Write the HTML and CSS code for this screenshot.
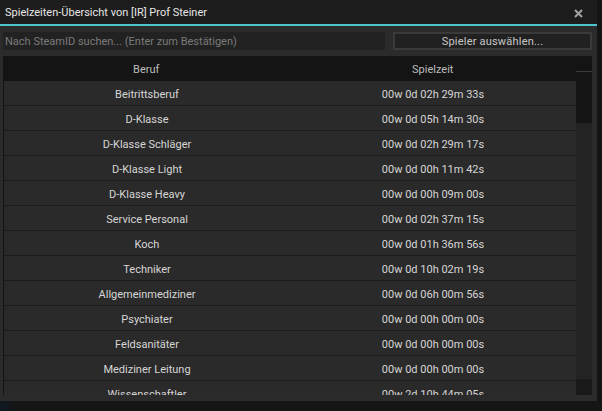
FILE: index.html
```html
<!DOCTYPE html>
<html lang="de">
<head>
    <meta charset="UTF-8">
    <title>Spielzeiten-Übersicht</title>
    <link rel="stylesheet" href="styles.css">
</head>
<body>
    <div class="frame">
        <div class="titlebar">
            <span class="title">Spielzeiten-Übersicht von [IR] Prof Steiner</span>
            <svg class="close" width="9" height="9" viewBox="0 0 9 9">
                <path d="M1 1 L8 8 M8 1 L1 8" stroke="#a3a3a3" stroke-width="2" fill="none"/>
            </svg>
        </div>

        <div class="content">
            <div class="toolbar">
                <input class="search" type="text" placeholder="Nach SteamID suchen... (Enter zum Bestätigen)">
                <button class="pick">Spieler auswählen...</button>
            </div>

            <div class="list">
                <div class="list-main">
                    <div class="list-head">
                        <div class="cell">Beruf</div>
                        <div class="cell">Spielzeit</div>
                    </div>
                    <div class="rows">
                        <div class="row"><div class="cell">Beitrittsberuf</div><div class="cell">00w 0d 02h 29m 33s</div></div>
                        <div class="row"><div class="cell">D-Klasse</div><div class="cell">00w 0d 05h 14m 30s</div></div>
                        <div class="row"><div class="cell">D-Klasse Schläger</div><div class="cell">00w 0d 02h 29m 17s</div></div>
                        <div class="row"><div class="cell">D-Klasse Light</div><div class="cell">00w 0d 00h 11m 42s</div></div>
                        <div class="row"><div class="cell">D-Klasse Heavy</div><div class="cell">00w 0d 00h 09m 00s</div></div>
                        <div class="row"><div class="cell">Service Personal</div><div class="cell">00w 0d 02h 37m 15s</div></div>
                        <div class="row"><div class="cell">Koch</div><div class="cell">00w 0d 01h 36m 56s</div></div>
                        <div class="row"><div class="cell">Techniker</div><div class="cell">00w 0d 10h 02m 19s</div></div>
                        <div class="row"><div class="cell">Allgemeinmediziner</div><div class="cell">00w 0d 06h 00m 56s</div></div>
                        <div class="row"><div class="cell">Psychiater</div><div class="cell">00w 0d 00h 00m 00s</div></div>
                        <div class="row"><div class="cell">Feldsanitäter</div><div class="cell">00w 0d 00h 00m 00s</div></div>
                        <div class="row"><div class="cell">Mediziner Leitung</div><div class="cell">00w 0d 00h 00m 00s</div></div>
                        <div class="row"><div class="cell">Wissenschaftler</div><div class="cell">00w 2d 10h 44m 05s</div></div>
                    </div>
                </div>
                <div class="scrollbar">
                    <div class="sb-head"></div>
                    <div class="sb-grip"></div>
                    <div class="sb-track"></div>
                    <div class="sb-down"></div>
                </div>
            </div>
        </div>
    </div>
</body>
</html>
```

FILE: styles.css
```css
body {
    margin: 0;
    width: 602px;
    height: 411px;
    overflow: hidden;
    background-color: #151515;
    background-image: radial-gradient(circle at 0 100%, #0d1a26 0, transparent 18px);
    font-family: Roboto, "Noto Sans", sans-serif;
    font-size: 11px;
    color: #d4d4d4;
}
.frame {
    width: 597px;
    height: 401px;
    display: flex;
    flex-direction: column;
    background-color: #2b2b2b;
}
.titlebar {
    height: 24px;
    flex: none;
    display: flex;
    align-items: center;
    justify-content: space-between;
    padding: 0 14px 0 5px;
    background-color: #1d1d1d;
    border-bottom: 2px solid #4fc3cb;
}
.title {
    color: #e6e6e6;
    font-size: 11px;
    padding-top: 1px;
}
.close {
    display: block;
    margin-top: 3px;
}
.content {
    flex: 1;
    min-height: 0;
    display: flex;
    flex-direction: column;
    padding: 6px 5px 6px 3px;
    gap: 6px;
}
.toolbar {
    display: flex;
    gap: 8px;
    height: 18px;
}
.search {
    width: 382px;
    box-sizing: border-box;
    border: none;
    padding: 0 2px;
    background-color: #222;
    font: inherit;
    font-size: 11px;
    color: #ddd;
    outline: none;
}
.search::placeholder {
    color: #7a7a7a;
}
.pick {
    flex: 1;
    box-sizing: border-box;
    border: 2px solid #3a3a3a;
    background-color: #212121;
    color: #c8c8c8;
    font: inherit;
    font-size: 11px;
    letter-spacing: 0.2px;
    padding: 0;
}
.list {
    flex: 1;
    min-height: 0;
    display: flex;
    background-color: #141414;
}
.list-main {
    flex: 1;
    display: flex;
    flex-direction: column;
    overflow: hidden;
}
.list-head {
    height: 25px;
    flex: none;
    display: flex;
    color: #bdbdbd;
}
.rows {
    border-left: 1px solid #141414;
}
.row {
    height: 24px;
    display: flex;
    background-color: #2a2a2a;
    border-bottom: 1px solid #1b1b1b;
    color: #d6d6d6;
}
.cell {
    flex: 1;
    display: flex;
    align-items: center;
    justify-content: center;
    padding-top: 2px;
}
.scrollbar {
    width: 16px;
    display: flex;
    flex-direction: column;
}
.sb-head {
    height: 15px;
    border-bottom: 1px solid #3a3a3a;
}
.sb-grip {
    height: 51px;
    background-color: #151515;
}
.sb-track {
    flex: 1;
    background-color: #232323;
}
.sb-down {
    height: 16px;
    background-color: #191919;
}
```
